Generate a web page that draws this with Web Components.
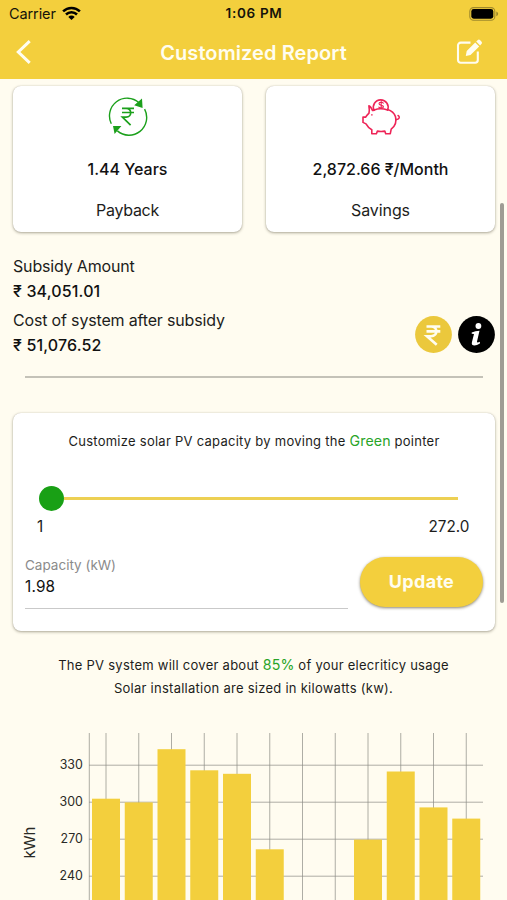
<!DOCTYPE html>
<html lang="en">
<head>
<meta charset="utf-8">
<title>Customized Report</title>
<style>
html,body{margin:0;height:900px;overflow:hidden}
body{background:#fffcf0;font-family:Inter,"Liberation Sans",sans-serif;color:#1d1d1b}
</style>
</head>
<body>
<report-screen></report-screen>
<script>
const define = (name, html) => customElements.define(name, class extends HTMLElement {
  constructor() {
    super();
    const t = document.createElement('template');
    t.innerHTML = html;
    this.attachShadow({ mode: 'open' }).append(t.content.cloneNode(true));
  }
});

define('status-bar', `
<style>
:host{display:grid;grid-template-columns:1fr auto 1fr;align-items:center;height:27px;padding:0 8px 0 9px;color:#15130a;font-size:14.5px;line-height:27px}
.l{display:flex;align-items:center;gap:6px;letter-spacing:-.1px}
.t{font-size:13.5px;font-weight:600;letter-spacing:.7px}
.r{justify-self:end;display:flex}
svg{display:block}
</style>
<div class="l"><span>Carrier</span><svg width="19" height="15" viewBox="0 0 19 15" fill="none" stroke="#000" stroke-width="2.5"><path d="M1.1 5.4a12 12 0 0 1 16.8 0M4 8.5a7.8 7.8 0 0 1 11 0"/><path d="M9.5 14L6.3 10.9a4.6 4.6 0 0 1 6.4 0z" fill="#000" stroke="none"/></svg></div>
<div class="t">1:06 PM</div>
<div class="r"><svg width="30" height="14" viewBox="0 0 30 14"><rect x=".8" y=".6" width="25" height="12.6" rx="3.8" fill="none" stroke="#a08a2c" stroke-width="1.1"/><rect x="2.3" y="2.1" width="22" height="9.6" rx="2.4"/><path d="M27.3 4.6c2.4.8 2.4 3.8 0 4.6z" fill="#9d8729"/></svg></div>
`);

define('nav-bar', `
<style>
:host{display:grid;grid-template-columns:60px 1fr 60px;align-items:center;height:52px;color:#fffdf0}
h1{margin:0;text-align:center;font-size:20px;font-weight:600;letter-spacing:.08px;line-height:51px}
svg{display:block;position:relative;top:-1px}
.b{padding-left:15px}.e{padding-left:8px}
</style>
<svg class="b" width="18" height="26" viewBox="0 0 18 26" fill="none" stroke="#fffdf0" stroke-width="3"><path d="M14.7 2.2L3.3 13l11.4 10.8"/></svg>
<h1><slot></slot></h1>
<svg class="e" width="30" height="30" viewBox="0 0 30 30"><path d="M15.5 5.6H5.7a2.7 2.7 0 0 0-2.7 2.7V23a2.7 2.7 0 0 0 2.7 2.7h14.4a2.7 2.7 0 0 0 2.7-2.7v-8.6" fill="none" stroke="#fffdf0" stroke-width="2.1"/><path d="M20.2 5.5l4 4-8.7 8.5-4.7.9.9-4.9z M21.2 4.5l1.4-1.3c.8-.8 1.8-.8 2.6 0l1.2 1.2c.8.8.8 1.8 0 2.6l-1.3 1.4z" fill="#fffdf0"/></svg>
`);

define('raised-card', `
<style>
:host{display:block;box-sizing:border-box;background:#fff;border-radius:8px;box-shadow:0 1px 3px rgba(60,55,30,.42),0 0 1px rgba(60,55,30,.25)}
</style><slot></slot>
`);

define('metric-card', `
<style>
:host{display:block}
raised-card{height:146.5px;display:flex;flex-direction:column;align-items:center;padding-top:11.5px}
.i{height:40px}
.v,.n{font-size:16px;line-height:24px;white-space:nowrap}
.v{font-weight:500;margin-top:20px;color:#111}
.n{margin-top:17px}
</style>
<raised-card><div class="i"><slot name="icon"></slot></div><div class="v"><slot name="value"></slot></div><div class="n"><slot></slot></div></raised-card>
`);

define('cycle-icon', `
<style>:host{display:block}svg{display:block}</style>
<svg width="40" height="40" viewBox="0.4 0.3 40 40" fill="none" stroke="#1ba01b" stroke-width="1.4">
<path d="M3.7 27A17.7 17.7 0 0 1 31.4 6M37 12.5A17.7 17.7 0 0 1 9.8 34.2"/>
<path d="M34.4 1.8L35 11.2L26.6 8.6zM5.4 29.4H13.8L7 37.4z" fill="#1ba01b" stroke="none"/>
<path d="M14.4 11.6H26.4M14.4 15.8H26.4M14.4 11.6h4.2c6 0 6 8.8 0 8.8H14.8L23 28.4" stroke-width="1.7"/></svg>
`);

define('piggy-icon', `
<style>:host{display:block}svg{display:block}</style>
<svg width="40" height="40" viewBox="0 0.3 40 40" fill="none" stroke="#ee2457" stroke-width="1.6" stroke-linejoin="round" stroke-linecap="round">
<path d="M13 13.6A7.4 7.4 0 1 1 26.6 13.3"/>
<path d="M13.2 13.2Q19.5 10.8 26.6 13.2"/>
<path d="M13.2 13.2L11.5 13.8Q9.7 9.5 7.9 9.2Q8.6 13 8 16.4Q5.4 19 4.7 20.4H2V25.7L5 27.2Q7 31 10.8 33V37H15.4L16.4 34.4Q20 35.2 23.8 34.4L24.7 37H29.3L30.2 32.4C34 29.5 35.7 24.6 34.5 20Q32.5 14.5 26.6 12.8"/>
<path d="M34.8 22.7C38 23.2 39.5 20 37 18.8M10.9 18v.2" stroke-width="1.5"/>
<path d="M22.3 6.4c-1.1-1.2-4.3-1.1-4.3.7 0 2 4.5 1.1 4.5 3 0 1.7-3.5 1.8-4.7.4M20.2 4.7v7" stroke-width="1.1"/></svg>
`);

define('amount-line', `
<style>
:host{display:block;font-size:16px;line-height:25px}
.n{letter-spacing:-.17px}.v{font-weight:500;color:#111;letter-spacing:.15px;height:25px}
</style><div class="n"><slot></slot></div><div class="v"><slot name="value"></slot></div>
`);

define('round-actions', `
<style>:host{display:flex;gap:5.5px}svg{display:block}</style>
<svg width="37" height="37" viewBox="0 0 37 37"><circle cx="18.5" cy="18.5" r="18.4" fill="#ebc83c"/><path d="M11.5 10.5H25.3M11.5 15.4H25.3M11.5 10.5h4.6c7 0 7 9.7 0 9.7H12L21.7 28.7" fill="none" stroke="#fffdf0" stroke-width="2.6"/></svg>
<svg width="37" height="37" viewBox="0 0 37 37"><circle cx="18.5" cy="18.5" r="18.4"/><circle cx="20.4" cy="10" r="2.9" fill="#fff"/><path d="M13.7 16.6q3.7-1.5 7.8-1.8L19 25.6q-.3 1.6 2.9.2v1.7q-3.1 2-5.4 2-3.3 0-2.6-3.2l2.1-8.3-2.3-.2z" fill="#fff"/></svg>
`);

define('capacity-slider', `
<style>
:host{display:block}
.s{display:flex;align-items:center;height:25px}
.k{width:25px;height:25px;border-radius:50%;background:#19a015}
.t{flex:1;height:3px;background:#edd053}
.l{display:flex;justify-content:space-between;font-size:15.3px;line-height:24px;margin:4px -11.5px 0 -1.5px}
</style>
<div class="s"><div class="k"></div><div class="t"></div></div>
<div class="l"><slot name="min"></slot><slot name="max"></slot></div>
`);

define('text-field', `
<style>
:host{display:block;border-bottom:1.5px solid #c9c9c9;box-sizing:border-box}
.n{font-size:13.5px;line-height:20px;color:#8b8b8b}
.v{font-size:15.3px;line-height:24px;letter-spacing:.2px;color:#111}
</style><div class="n"><slot></slot></div><div class="v"><slot name="value"></slot></div>
`);

define('pill-button', `
<style>
:host{display:block;width:123px;height:50px;border-radius:25px;background:#f3cf3d;box-shadow:0 1px 3px rgba(60,50,20,.6);color:#fffdf0;text-align:center;font-size:18px;font-weight:700;line-height:50px;letter-spacing:.3px}
</style><slot></slot>
`);

define('scroll-thumb', `<style>:host{display:block;width:4px;height:400px;border-radius:2px;background:#9f9c94}</style>`);

customElements.define('usage-chart', class extends HTMLElement {
  connectedCallback() {
    const tops = [798.7, 802.4, 749.2, 770.3, 773.8, 849.3, null, null, 839.6, 771.5, 807.4, 818.6];
    const x = i => 106 + 32.75 * i, top = 733;
    const v = tops.map((_, i) => `<path d="M${x(i)} 0V167"/>`).join('');
    const rows = [[330, 765.2], [300, 802.2], [270, 839.2], [240, 876.2]];
    const h = rows.map(r => `<path d="M89 ${r[1] - top}H483"/>`).join('');
    const bars = tops.map((y, i) => y ? `<rect x="${x(i) - 14}" y="${y - top}" width="28" height="${900 - y}"/>` : '').join('');
    const labels = rows.map(r => `<text x="82.8" y="${r[1] - top + 3.9}" text-anchor="end">${r[0]}</text>`).join('');
    this.attachShadow({ mode: 'open' }).innerHTML = `
<style>:host{display:block;height:167px}svg{display:block}text{font:12.4px Inter,"Liberation Sans",sans-serif;fill:#2a2a26}.u{font-size:15px}</style>
<svg width="507" height="167" viewBox="0 0 507 167">
<g stroke="#8c8b84" stroke-opacity=".7" stroke-width="1">${v}${h}<path d="M89.3 0V167"/></g>
<g fill="#f3cf3d">${bars}</g>${labels}
<text class="u" transform="translate(35.3 125.5) rotate(-90)">kWh</text></svg>`;
  }
});

define('report-screen', `
<style>
:host{display:flex;flex-direction:column;width:507px;height:900px;position:relative;overflow:hidden}
header{background:#f3cf3d;height:79px;flex:none}
.m{display:grid;grid-template-columns:229px 229px;gap:24px;padding:6.5px 12.5px 0 13px}
.a{display:flex;justify-content:space-between;align-items:flex-end;padding:21.5px 12.5px 0 13px;height:104px}
.d{display:grid;gap:4px}
round-actions{margin-bottom:5px}
.rule{height:1.5px;background:#c4c2b8;margin:18.5px 24.5px 0 25px}
.c{margin:35.5px 12px 0 13px;height:218px;padding:17px 12px 0;display:flex;flex-direction:column;flex:none}
.c p,.p{margin:0;text-align:center;font-size:13px;line-height:22px;letter-spacing:.26px;white-space:nowrap}
.p{line-height:22.6px;margin-top:23px}
p b{font-weight:400;font-size:14.2px;color:#28a428;letter-spacing:.1px}
capacity-slider{margin:34px 25px 0 13.5px}
.f{display:flex;justify-content:space-between;margin-top:18px}
text-field{width:323px;height:54px;margin-top:-2px}
usage-chart{margin-top:33.8px}
scroll-thumb{position:absolute;left:499.5px;top:203px}
</style>
<header><status-bar></status-bar><nav-bar>Customized Report</nav-bar></header>
<div class="m">
<metric-card><cycle-icon slot="icon"></cycle-icon><span slot="value">1.44 Years</span><span style="letter-spacing:-.3px">Payback</span></metric-card>
<metric-card><piggy-icon slot="icon"></piggy-icon><span slot="value">2,872.66 ₹/Month</span><span style="letter-spacing:-.1px">Savings</span></metric-card>
</div>
<div class="a"><div class="d">
<amount-line>Subsidy Amount<span slot="value">₹ 34,051.01</span></amount-line>
<amount-line>Cost of system after subsidy<span slot="value">₹ 51,076.52</span></amount-line>
</div><round-actions></round-actions></div>
<div class="rule"></div>
<raised-card class="c">
<p>Customize solar PV capacity by moving the <b>Green</b> pointer</p>
<capacity-slider><span slot="min">1</span><span slot="max">272.0</span></capacity-slider>
<div class="f"><text-field>Capacity (kW)<span slot="value">1.98</span></text-field><pill-button>Update</pill-button></div>
</raised-card>
<p class="p">The PV system will cover about <b>85%</b> of your elecriticy usage<br>Solar installation are sized in kilowatts (kw).</p>
<usage-chart></usage-chart>
<scroll-thumb></scroll-thumb>
`);
</script>
</body>
</html>
